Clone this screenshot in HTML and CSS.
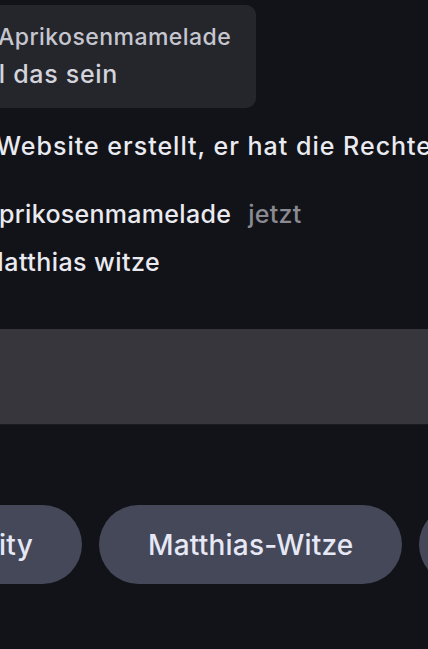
FILE: index.html
```html
<!DOCTYPE html>
<html lang="de">
<head>
<meta charset="utf-8">
<link rel="stylesheet" href="styles.css">
</head>
<body>
<div class="screen">
  <section class="chat">
    <div class="reply">
      <div class="reply-name">Aprikosenmamelade</div>
      <div class="reply-text"><span class="shift">Was soll das sein</span></div>
    </div>
    <p class="text prev">Website erstellt, er hat die Rechte dafür</p>
    <div class="msg">
      <div class="meta"><span class="name">Aprikosenmamelade</span><span class="time">jetzt</span></div>
      <p class="text">Matthias witze</p>
    </div>
  </section>
  <div class="composer"></div>
  <div class="chips">
    <span class="chip">Community</span>
    <span class="chip">Matthias-Witze</span>
    <span class="chip">Memes</span>
  </div>
</div>
</body>
</html>
```

FILE: styles.css
```css
* { box-sizing: border-box; }
html, body {
  margin: 0;
  padding: 0;
  background: #121318;
}
body {
  width: 428px;
  height: 649px;
  overflow: hidden;
  font-family: Inter, "Noto Sans", sans-serif;
  color: #eaeaf1;
}
.screen {
  width: 428px;
  height: 649px;
  overflow: hidden;
  display: flex;
  flex-direction: column;
}
.chat {
  display: flex;
  flex-direction: column;
  padding-top: 5px;
}
.reply {
  margin-left: -30px;
  width: 286px;
  height: 103px;
  background: #25262c;
  border-radius: 10px;
  padding: 18px 0 0 28px;
  display: flex;
  flex-direction: column;
  gap: 8px;
  overflow: hidden;
}
.reply-name {
  font-size: 23px;
  line-height: 28px;
  font-weight: 500;
  letter-spacing: 0.45px;
  color: #c6c6d0;
  white-space: nowrap;
}
.reply-text {
  font-size: 25px;
  line-height: 30px;
  font-weight: 500;
  letter-spacing: 0.7px;
  color: #d4d4dc;
  white-space: nowrap;
}
.shift { margin-left: -97px; }
.text {
  margin: 0;
  font-size: 25px;
  line-height: 32px;
  font-weight: 500;
  letter-spacing: 0.45px;
  white-space: nowrap;
  color: #eaeaf1;
}
.prev {
  margin-top: 22px;
  margin-left: -4px;
  letter-spacing: 1px;
}
.msg {
  margin-top: 36px;
  margin-left: -19px;
  display: flex;
  flex-direction: column;
  gap: 16px;
}
.meta {
  display: flex;
  gap: 17px;
  font-size: 25px;
  line-height: 32px;
  font-weight: 500;
  letter-spacing: 0.3px;
  white-space: nowrap;
}
.name { color: #eaeaf1; }
.time { color: #8a8a92; }
.composer {
  margin-top: 51px;
  height: 96px;
  background: #37363c;
  border-bottom: 1px solid #1a1b20;
}
.chips {
  margin-top: 80px;
  margin-left: -172px;
  display: flex;
  gap: 17px;
}
.chip {
  flex: none;
  height: 79px;
  padding: 0 49px;
  border-radius: 40px;
  background: #454858;
  color: #e6e8f6;
  font-size: 28px;
  font-weight: 500;
  letter-spacing: 0.2px;
  display: flex;
  align-items: center;
  white-space: nowrap;
}
```
